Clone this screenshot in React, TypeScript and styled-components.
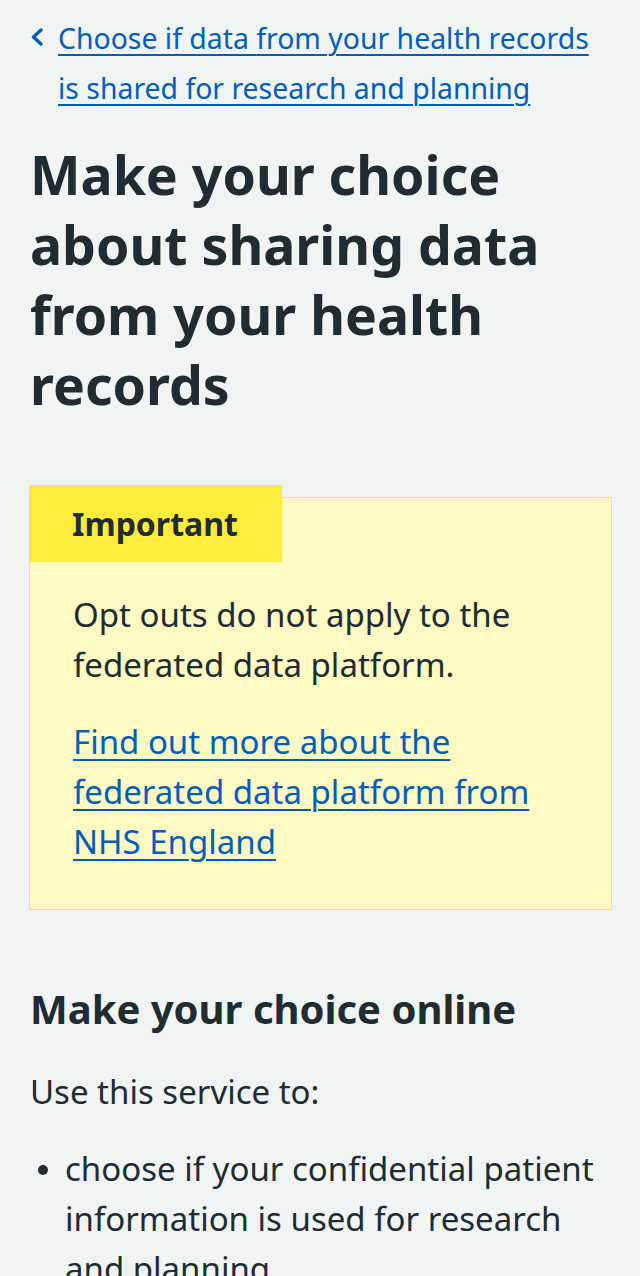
import styled, { createGlobalStyle } from "styled-components";

const GlobalStyle = createGlobalStyle`
  html, body {
    margin: 0;
    padding: 0;
    background: #f0f4f5;
  }

  body {
    font-family: "Noto Sans", "Open Sans", sans-serif;
    color: #212b32;
    -webkit-font-smoothing: antialiased;
  }
`;

const Page = styled.main`
  padding: 13px 28px 0 30px;
`;

const BackLink = styled.a`
  display: flex;
  align-items: flex-start;
  gap: 14px;
  color: #005eb8;
  font-size: 28.4px;
  line-height: 50px;
  text-decoration: none;
  margin-bottom: 27px;

  span {
    text-decoration: underline;
    text-decoration-thickness: 2px;
    text-underline-offset: 5px;
  }

  svg {
    flex: none;
    margin-top: 15px;
  }
`;

const Title = styled.h1`
  margin: 0 0 77px 0;
  font-size: 53.6px;
  line-height: 70px;
  font-weight: 700;
`;

const Callout = styled.section`
  background: #fff9c4;
  border: 1px solid #ffeb3b;
  margin: 0 0 0 -1px;
  padding: 0 44px 42px 43px;
`;

const CalloutLabel = styled.h3`
  display: inline-block;
  background: #ffeb3b;
  margin: -13px 0 0 -44px;
  padding: 13px 44px 13px 43px;
  font-size: 32px;
  line-height: 51px;
  font-weight: 700;
`;

const Paragraph = styled.p<{ $gap?: number }>`
  margin: 0 0 ${(p) => p.$gap ?? 27}px 0;
  font-size: 33px;
  line-height: 50px;
`;

const CalloutText = styled(Paragraph)`
  margin-top: 28px;
`;

const TextLink = styled.a`
  color: #005eb8;
  text-decoration: underline;
  text-decoration-thickness: 2px;
  text-underline-offset: 5px;
`;

const Subtitle = styled.h2`
  margin: 71px 0 31px 0;
  font-size: 40px;
  line-height: 55px;
  font-weight: 700;
`;

const List = styled.ul`
  margin: 0;
  padding: 0;
  list-style: none;
  font-size: 33px;
  line-height: 50px;
`;

const ListItem = styled.li`
  display: grid;
  grid-template-columns: 35px 1fr;
  padding-right: 2px;

  &::before {
    content: "";
    width: 10px;
    height: 10px;
    border-radius: 50%;
    background: #212b32;
    margin: 21px 0 0 8px;
  }
`;

const Chevron = () => (
  <svg width="14" height="18" viewBox="0 0 14 18" aria-hidden="true">
    <path
      d="M11 2 L3.5 9 L11 16"
      fill="none"
      stroke="#005eb8"
      strokeWidth="3.4"
      strokeLinecap="round"
      strokeLinejoin="round"
    />
  </svg>
);

export default function App() {
  return (
    <>
      <GlobalStyle />
      <Page>
        <BackLink href="#">
          <Chevron />
          <span>Choose if data from your health records is shared for research and planning</span>
        </BackLink>

        <Title>Make your choice about sharing data from your health records</Title>

        <Callout>
          <CalloutLabel>Important</CalloutLabel>
          <CalloutText>Opt outs do not apply to the federated data platform.</CalloutText>
          <Paragraph $gap={0}>
            <TextLink href="#">Find out more about the federated data platform from NHS England</TextLink>
          </Paragraph>
        </Callout>

        <Subtitle>Make your choice online</Subtitle>
        <Paragraph>Use this service to:</Paragraph>
        <List>
          <ListItem>choose if your confidential patient information is used for research and planning</ListItem>
        </List>
      </Page>
    </>
  );
}
